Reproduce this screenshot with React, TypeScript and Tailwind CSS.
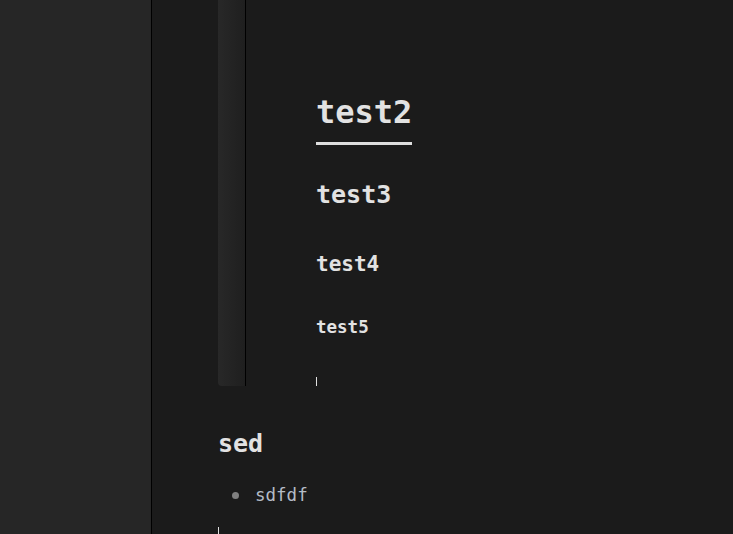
export default function App() {
  const mono = { fontFamily: '"DejaVu Sans Mono", "Liberation Mono", monospace' };
  return (
    <div className="flex h-[534px] w-[733px] overflow-hidden bg-[#1b1b1b]" style={mono}>
      <aside className="h-full w-[152px] shrink-0 border-r border-black bg-[#262626]" />
      <main className="flex-1 pl-[66px]">
        <div className="flex h-[386px]">
          <div className="w-[28px] shrink-0 rounded-bl-sm border-r border-black bg-gradient-to-r from-[#282828] to-[#1f1f1f]" />
          <div className="flex flex-col pl-[70px] pt-[92px] text-[#e2e2e2]">
            <h1 className="self-start border-b-[3px] border-[#dedede] pb-[10px] text-[32px] font-bold leading-[40px]">
              test2
            </h1>
            <h2 className="mt-[35px] text-[25px] font-bold leading-[30px]">test3</h2>
            <h3 className="mt-[41px] text-[21px] font-bold leading-[26px]">test4</h3>
            <h4 className="mt-[39px] text-[17.5px] font-bold leading-[22px]">test5</h4>
            <span className="mt-[39px] h-[9px] w-px bg-[#e0e0e0]" />
          </div>
        </div>
        <div className="flex flex-col pt-[43px] text-[#e2e2e2]">
          <h2 className="text-[25px] font-bold leading-[30px]">sed</h2>
          <ul className="mt-[25px] pl-[14px]">
            <li className="flex items-center gap-[16px] text-[17.5px] leading-[22px] text-[#b4bcc6]">
              <span className="h-[7px] w-[7px] rounded-full bg-[#808080]" />
              sdfdf
            </li>
          </ul>
          <span className="mt-[21px] h-[9px] w-px bg-[#e0e0e0]" />
        </div>
      </main>
    </div>
  );
}
